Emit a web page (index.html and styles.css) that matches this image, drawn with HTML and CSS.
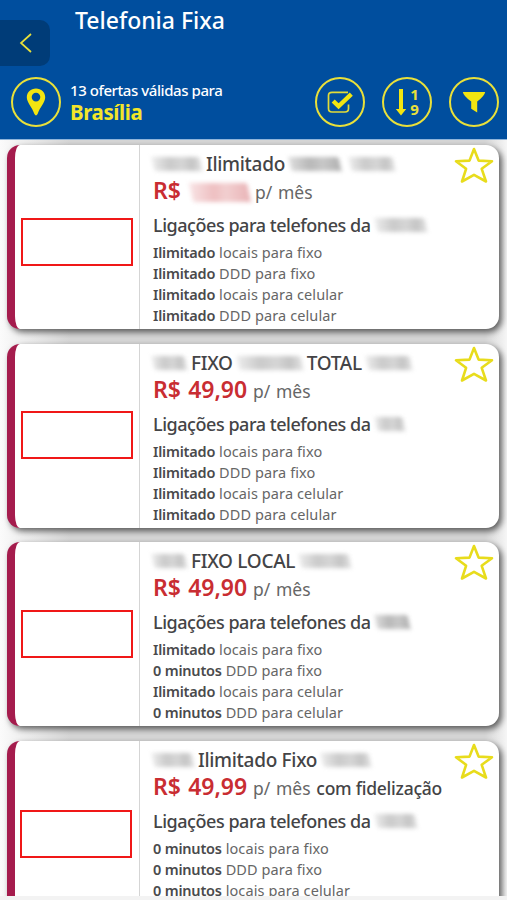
FILE: index.html
```
<!DOCTYPE html>
<html lang="pt-BR">
<head>
    <meta charset="UTF-8">
    <meta name="viewport" content="width=device-width, initial-scale=1.0">
    <title>Telefonia Fixa</title>
    <link rel="stylesheet" href="styles.css">
</head>
<body>
    <svg class="defs">
        <symbol id="star" viewBox="0 0 40 38">
            <path d="M20 3 L24.6 14.6 L38 15.2 L27.7 22.8 L32 35.5 L20 28.9 L8 35.5 L12.1 22.8 L2 15.2 L15.5 14.6 Z" fill="#fff" stroke="#e8dc1c" stroke-width="2.6" stroke-linejoin="round"/>
        </symbol>
    </svg>

    <header class="header">
        <h1>Telefonia Fixa</h1>
        <button class="back">
            <svg width="14" height="22" viewBox="0 0 14 22"><path d="M12 2 L2 11 L12 20" fill="none" stroke="#e9e03a" stroke-width="1.7"/></svg>
        </button>
        <div class="toolbar">
            <button class="circle">
                <svg width="20" height="30" viewBox="0 0 20 30"><path fill-rule="evenodd" d="M10 1.5 C4.8 1.5 .8 5.3 .8 10.3 C.8 15.5 6 20 8.4 27 Q10 29.8 11.6 27 C14 20 19.2 15.5 19.2 10.3 C19.2 5.3 15.2 1.5 10 1.5 Z M10 5.8 A4.3 4.3 0 1 1 10 14.4 A4.3 4.3 0 1 1 10 5.8 Z" fill="#f2e511"/></svg>
            </button>
            <div class="location">
                <p>13 ofertas válidas para</p>
                <strong>Brasília</strong>
            </div>
            <div class="actions">
                <button class="circle">
                    <svg width="28" height="24" viewBox="0 0 28 24"><path d="M22 2.3 H6 Q2.5 2.3 2.5 5.5 V18.5 Q2.5 22 6 22 H19 Q22.5 22 22.5 18.5 V14.5" fill="none" stroke="#e2dc38" stroke-width="1.7"/><path d="M7.2 11 L12.6 16.3 L25.3 4.2" fill="none" stroke="#f2e511" stroke-width="4.4"/></svg>
                </button>
                <button class="circle sort">
                    <svg width="12" height="28" viewBox="0 0 12 28"><path d="M4 1 H8 V21 H11.2 L6 27.5 L.8 21 H4 Z" fill="#f2e511"/></svg>
                    <div class="digits"><span>1</span><span>9</span></div>
                </button>
                <button class="circle">
                    <svg width="24" height="24" viewBox="0 0 24 24"><path d="M.8 2 H23.2 Q22.5 6 15.2 11.5 V22.6 L9.2 18.8 V11.5 Q1.5 6 .8 2 Z" fill="#f2e511"/></svg>
                </button>
            </div>
        </div>
    </header>

    <main class="offers">
        <article class="card">
            <div class="brand"><div class="brand-box"></div></div>
            <div class="info">
                <h2><i class="hidden-word w52"></i>Ilimitado<i class="hidden-word dark w60"></i><i class="hidden-word w48"></i></h2>
                <p class="price"><b>R$</b><i class="hidden-word red"></i>p/ mês</p>
                <h3>Ligações para telefones da<i class="hidden-word w60"></i></h3>
                <ul>
                    <li><b>Ilimitado</b> locais para fixo</li>
                    <li><b>Ilimitado</b> DDD para fixo</li>
                    <li><b>Ilimitado</b> locais para celular</li>
                    <li><b>Ilimitado</b> DDD para celular</li>
                </ul>
            </div>
            <svg class="star"><use href="#star"/></svg>
        </article>

        <article class="card">
            <div class="brand"><div class="brand-box up"></div></div>
            <div class="info">
                <h2><i class="hidden-word w38"></i>FIXO<i class="hidden-word w74"></i>TOTAL<i class="hidden-word w48"></i></h2>
                <p class="price"><b>R$ 49,90</b> p/ mês</p>
                <h3>Ligações para telefones da<i class="hidden-word w32"></i></h3>
                <ul>
                    <li><b>Ilimitado</b> locais para fixo</li>
                    <li><b>Ilimitado</b> DDD para fixo</li>
                    <li><b>Ilimitado</b> locais para celular</li>
                    <li><b>Ilimitado</b> DDD para celular</li>
                </ul>
            </div>
            <svg class="star"><use href="#star"/></svg>
        </article>

        <article class="card">
            <div class="brand"><div class="brand-box up"></div></div>
            <div class="info">
                <h2><i class="hidden-word w38"></i>FIXO LOCAL<i class="hidden-word w60"></i></h2>
                <p class="price"><b>R$ 49,90</b> p/ mês</p>
                <h3>Ligações para telefones da<i class="hidden-word dark w38"></i></h3>
                <ul>
                    <li><b>Ilimitado</b> locais para fixo</li>
                    <li><b>0 minutos</b> DDD para fixo</li>
                    <li><b>Ilimitado</b> locais para celular</li>
                    <li><b>0 minutos</b> DDD para celular</li>
                </ul>
            </div>
            <svg class="star"><use href="#star"/></svg>
        </article>

        <article class="card">
            <div class="brand"><div class="brand-box last"></div></div>
            <div class="info">
                <h2><i class="hidden-word w44"></i>Ilimitado Fixo<i class="hidden-word w52"></i></h2>
                <p class="price"><b>R$ 49,99</b> p/ mês <strong>com fidelização</strong></p>
                <h3>Ligações para telefones da<i class="hidden-word w44"></i></h3>
                <ul>
                    <li><b>0 minutos</b> locais para fixo</li>
                    <li><b>0 minutos</b> DDD para fixo</li>
                    <li><b>0 minutos</b> locais para celular</li>
                </ul>
            </div>
            <svg class="star"><use href="#star"/></svg>
        </article>
    </main>
</body>
</html>
```
FILE: styles.css
```
:root {
    --blue: #004e9e;
    --yellow: #e9e03a;
    --text: #444446;
}
* {
    margin: 0;
    padding: 0;
    box-sizing: border-box;
}
body {
    height: 900px;
    overflow: hidden;
    display: flex;
    flex-direction: column;
    font-family: "Noto Sans", "Open Sans", sans-serif;
    color: var(--text);
    background: #f3f3f3;
}
button {
    border: none;
    background: none;
    font-family: inherit;
}
.defs {
    display: none;
}
.header {
    flex: none;
    height: 140px;
    position: relative;
    background: var(--blue);
    border-bottom: 1px solid #8fb4da;
    color: #fff;
}
h1 {
    height: 42px;
    padding-left: 75px;
    font-size: 23px;
    line-height: 40px;
    font-weight: 500;
}
.back {
    position: absolute;
    left: 0;
    top: 20px;
    width: 50px;
    height: 46px;
    padding-left: 1px;
    display: flex;
    align-items: center;
    justify-content: center;
    background: #003c78;
    border-radius: 0 10px 10px 0;
}
.toolbar {
    display: flex;
    align-items: center;
    padding: 35px 8px 0 11px;
}
.circle {
    width: 50px;
    height: 50px;
    display: flex;
    align-items: center;
    justify-content: center;
    border: 2px solid var(--yellow);
    border-radius: 50%;
}
.location {
    padding-left: 9px;
}
.location p {
    font-size: 15px;
    line-height: 20px;
    font-weight: 500;
    letter-spacing: -0.43px;
}
.location strong {
    display: block;
    font-size: 20.5px;
    line-height: 24px;
    letter-spacing: -0.4px;
    color: #f2e52a;
}
.actions {
    display: flex;
    gap: 17px;
    margin-left: auto;
}
.sort {
    gap: 3px;
}
.digits {
    display: flex;
    flex-direction: column;
    color: var(--yellow);
    font-size: 15px;
    line-height: 15px;
    font-weight: 700;
}
.offers {
    height: 756px;
    overflow: hidden;
    padding: 5px 8px 0 7px;
    display: flex;
    flex-direction: column;
    gap: 14.5px;
    background: linear-gradient(90deg, #fbfbfb, #d6d6d6 70px, #d6d6d6 485px, #f6f6f6);
}
.card {
    position: relative;
    flex: none;
    height: 184px;
    display: flex;
    border-left: 8px solid #a51c4d;
    border-radius: 13px;
    background: #fff;
    box-shadow: 3px 3px 6px rgba(0, 0, 0, 0.6);
}
.brand {
    width: 125px;
    display: flex;
    align-items: center;
    padding: 10px 0 0 6px;
    border-right: 1px solid #d5d5d5;
}
.brand-box {
    width: 112px;
    height: 48px;
    border: 2px solid #f01818;
}
.brand-box.up {
    margin-bottom: 11px;
}
.brand-box.last {
    margin-left: -1px;
    margin-bottom: 8px;
}
.info {
    flex: 1;
    padding: 6px 0 0 13px;
    white-space: nowrap;
}
h2, h3 {
    display: flex;
    align-items: center;
    font-weight: 500;
}
h2 {
    height: 26px;
    font-size: 19px;
    letter-spacing: -0.3px;
}
h3 {
    height: 28px;
    margin-top: 6px;
    font-size: 18px;
    letter-spacing: -0.46px;
}
.price {
    height: 28px;
    line-height: 27px;
    font-size: 17.5px;
    word-spacing: 1.2px;
    color: #666;
}
.price b {
    font-size: 23px;
    font-weight: 600;
    color: #c92d32;
}
.price strong {
    font-weight: 500;
    letter-spacing: -0.25px;
    word-spacing: 0;
    color: var(--text);
}
ul {
    list-style: none;
    padding-top: 3px;
}
li {
    font-size: 14.5px;
    line-height: 21.1px;
    letter-spacing: 0.1px;
    color: #666;
}
li b {
    font-weight: 600;
    letter-spacing: -0.2px;
    color: #4a4a4c;
}
.star {
    position: absolute;
    top: 1px;
    right: 5px;
    width: 40px;
    height: 38px;
}

/* blurred out operator and plan names */
.hidden-word {
    display: inline-block;
    height: 14px;
    margin: 0 5px;
    background: linear-gradient(100deg, #ededed, #cacaca 35%, #d6d6d6 60%, #c4c4c4 80%, #e4e4e4);
    filter: blur(2.2px);
    transform: skewX(12deg);
}
h2 .hidden-word:first-child {
    margin-left: 0;
}
.hidden-word.dark {
    background: linear-gradient(100deg, #dedede, #b8b8b8 40%, #c8c8c8 65%, #b0b0b0);
}
.hidden-word.red {
    width: 58px;
    height: 19px;
    margin: 0 6px 0 10px;
    vertical-align: -3px;
    background: linear-gradient(100deg, #f8e4e5, #eebfc1 40%, #f2cfd0 60%, #e9b3b6);
}
.w32 { width: 28px; }
.w38 { width: 33px; }
.w44 { width: 40px; }
.w48 { width: 44px; }
.w52 { width: 48px; }
.w60 { width: 50px; }
.w74 { width: 64px; }
```
